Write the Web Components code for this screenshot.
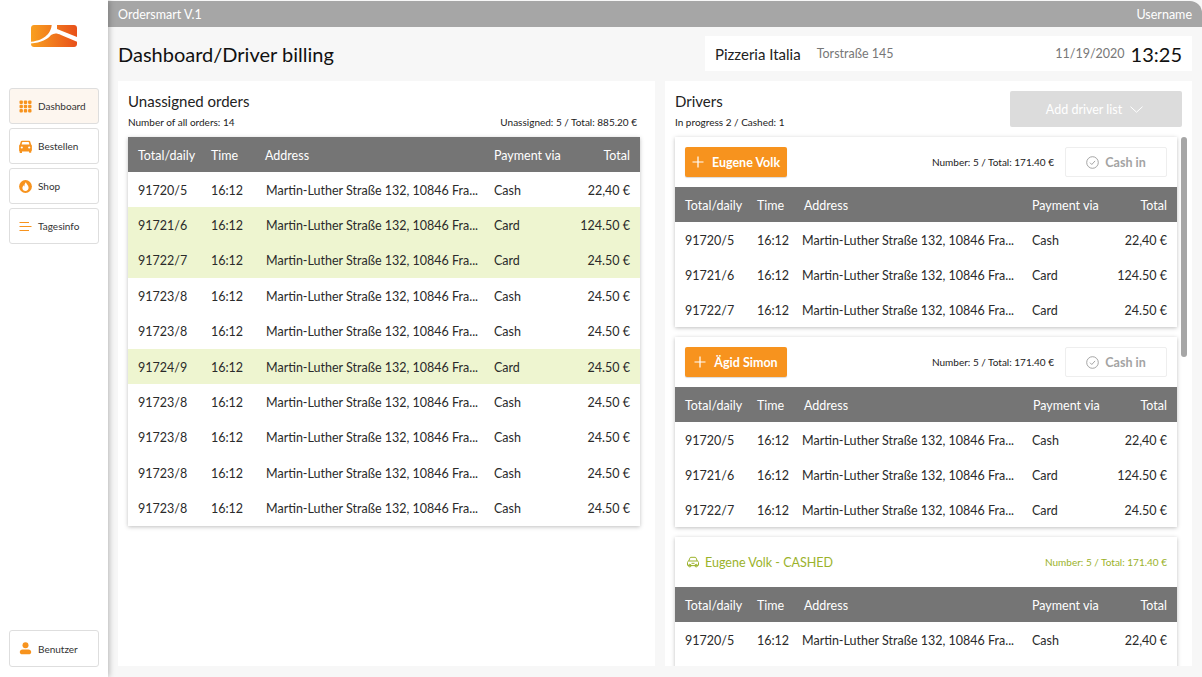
<!DOCTYPE html>
<html lang="en">
<head>
<meta charset="utf-8">
<title>Ordersmart</title>
<style>
  html, body { margin: 0; height: 100%; overflow: hidden; }
  body { font-family: Lato, "Open Sans", sans-serif; color: #222; background: #f7f7f7; }
</style>
</head>
<body>
<app-shell></app-shell>

<script>
const ICONS = {
  grid: `<svg width="13" height="13" viewBox="0 0 13 13" fill="#f7931e"><rect x="0.5" y="0.5" width="3.4" height="3.4" rx="1"/><rect x="4.8" y="0.5" width="3.4" height="3.4" rx="1"/><rect x="9.1" y="0.5" width="3.4" height="3.4" rx="1"/><rect x="0.5" y="4.8" width="3.4" height="3.4" rx="1"/><rect x="4.8" y="4.8" width="3.4" height="3.4" rx="1"/><rect x="9.1" y="4.8" width="3.4" height="3.4" rx="1"/><rect x="0.5" y="9.1" width="3.4" height="3.4" rx="1"/><rect x="4.8" y="9.1" width="3.4" height="3.4" rx="1"/><rect x="9.1" y="9.1" width="3.4" height="3.4" rx="1"/></svg>`,
  car: `<svg width="13" height="13" viewBox="0 0 13 13"><path fill="#f7931e" d="M3 .8h7c.6 0 1 .3 1.200.8l.9 3c.5.3.8.8.8 1.400v4.300c0 .4-.2.700-.6.700v1.200c0 .3-.2.500-.5.500h-1.300c-.3 0-.5-.2-.5-.5V11.500H3v1.200c0 .3-.2.500-.5.500H1.200c-.3 0-.5-.2-.5-.5v-1.200c-.4 0-.6-.3-.6-.7V6c0-.6.300-1.100.8-1.400l.9-3C2 1.100 2.400.8 3 .8z"/><path fill="#fff" d="M3.300 2h6.400l.7 2.500H2.600z"/><circle cx="2.800" cy="7.500" r="1.100" fill="#fff"/><circle cx="10.200" cy="7.500" r="1.100" fill="#fff"/></svg>`,
  shop: `<svg width="13" height="13" viewBox="0 0 13 13"><circle cx="6.500" cy="6.500" r="6.400" fill="#f7931e"/><path fill="#fff" d="M6.900 2.200c.4 1.600 2.700 2.900 2.700 5.600 0 1.900-1.400 3.200-3.100 3.200s-3.100-1.300-3.100-3c0-1.300.7-2.200 1.300-2.800.1.700.4 1.100.8 1.300-.2-1.600.2-3.200 1.400-4.300z"/></svg>`,
  lines: `<svg width="13" height="13" viewBox="0 0 13 13" stroke="#f7931e" stroke-width="1.100" fill="none"><path d="M.5 2.500h9.500M.5 6.500h12M.5 10.500h9.500"/></svg>`,
  user: `<svg width="13" height="13" viewBox="0 0 13 13" fill="#f7931e"><circle cx="6.500" cy="3.300" r="3"/><path d="M3.500 7.500h6c1.500 0 2.700 1 2.700 2.400 0 1.400-1 2.300-2.700 2.300h-6C1.800 12.200.8 11.300.8 9.900c0-1.400 1.200-2.400 2.700-2.400z"/></svg>`,
  plus: `<svg width="12" height="12" viewBox="0 0 12 12" stroke="#fff" stroke-width="1.200" fill="none"><path d="M6 .5v11M.5 6h11"/></svg>`,
  check: `<svg width="13" height="13" viewBox="0 0 13 13" stroke="#9a9a9a" stroke-width=".9" fill="none"><circle cx="6.500" cy="6.500" r="5.800"/><path d="M4 6.700l1.800 1.800 3.300-3.600"/></svg>`,
  chevron: `<svg width="13" height="7" viewBox="0 0 13 7" stroke="#fff" stroke-width="1" fill="none"><path d="M.5.700l6 5.500 6-5.500"/></svg>`,
  greenCar: `<svg width="14" height="12" viewBox="0 0 14 12" stroke="#9bb22a" stroke-width="1" fill="none"><path d="M2.800 5l1-2.800c.2-.6.600-.9 1.200-.9h4c.6 0 1 .3 1.200.9l1 2.800"/><path d="M1.500 9V6.500C1.500 5.600 2.100 5 3 5h8c.9 0 1.500.6 1.500 1.500V9c0 .4-.2.600-.6.600H2.100c-.4 0-.6-.2-.6-.6z"/><circle cx="3.800" cy="9.600" r="1.300"/><circle cx="10.200" cy="9.600" r="1.300"/><path d="M5.500 7.300h3"/></svg>`
};

const ADDRESS = 'Martin-Luther Straße 132, 10846 Fra...';

class NavButton extends HTMLElement {
  connectedCallback() {
    if (this.shadowRoot) return;
    const shadow = this.attachShadow({ mode: 'open' });
    const active = this.hasAttribute('active');
    shadow.innerHTML = `
      <style>
        :host { display: flex; align-items: center; box-sizing: border-box; width: 90px; height: 36px; padding-left: 9px; gap: 6px; flex: none;
          border: 1px solid #dedede; border-radius: 3px; background: ${active ? '#fdf6ef' : '#fff'}; font-size: 10px; color: #333; }
        .icon { display: flex; }
      </style>
      <span class="icon">${ICONS[this.getAttribute('icon')]}</span><slot></slot>`;
  }
}

class SideBar extends HTMLElement {
  connectedCallback() {
    if (this.shadowRoot) return;
    const shadow = this.attachShadow({ mode: 'open' });
    shadow.innerHTML = `
      <style>
        :host { display: flex; flex-direction: column; box-sizing: border-box; flex: none; width: 108px; height: 677px; padding: 25px 0 10px 9px;
          background: #fff; box-shadow: 1px 0 6px rgba(0,0,0,.28); position: relative; z-index: 2; }
        .logo { display: block; margin: 0 0 41px 22px; }
        nav { display: flex; flex-direction: column; gap: 4px; flex: 1; }
        .user { height: 37px; }
      </style>
      <svg class="logo" width="46" height="22" viewBox="0 0 46 22">
        <defs>
          <linearGradient id="lg" x1="0" x2="1" y1="0" y2="0"><stop offset="0" stop-color="#f9a020"/><stop offset="1" stop-color="#e8501a"/></linearGradient>
          <clipPath id="lc"><path d="M3 0h40c1.700 0 3 1.300 3 3v16c0 1.700-1.300 3-3 3H3c-1.700 0-3-1.300-3-3V3C0 1.300 1.300 0 3 0z"/></clipPath>
        </defs>
        <g clip-path="url(#lc)">
          <rect width="46" height="22" fill="url(#lg)"/>
          <path fill="#fff" d="M20.700 0C20 7 15 15 0 16.800V18.400C10 18 17 14 20 10 23 8 26 8 30 10L46 16.700V12L26 4V0Z"/>
        </g>
      </svg>
      <nav>
        <nav-button icon="grid" active>Dashboard</nav-button>
        <nav-button icon="car">Bestellen</nav-button>
        <nav-button icon="shop">Shop</nav-button>
        <nav-button icon="lines">Tagesinfo</nav-button>
      </nav>
      <nav-button class="user" icon="user">Benutzer</nav-button>`;
  }
}

class TopBar extends HTMLElement {
  connectedCallback() {
    if (this.shadowRoot) return;
    const shadow = this.attachShadow({ mode: 'open' });
    shadow.innerHTML = `
      <style>
        :host { display: flex; justify-content: space-between; align-items: center; box-sizing: border-box; height: 26px; margin-top: 1px; padding: 0 10px;
          background: #a6a6a6; color: #fff; font-size: 12.500px; border-top-right-radius: 12px; }
      </style>
      <span>Ordersmart V.1</span><span>Username</span>`;
  }
}

class StoreInfo extends HTMLElement {
  connectedCallback() {
    if (this.shadowRoot) return;
    const shadow = this.attachShadow({ mode: 'open' });
    shadow.innerHTML = `
      <style>
        :host { display: flex; align-items: center; box-sizing: border-box; width: 487px; height: 35px; padding: 0 10px; background: #fff; }
        .name { font-size: 15px; color: #222; }
        .street { font-size: 12.500px; color: #777; margin-left: 16px; }
        .date { font-size: 12.500px; color: #777; margin-left: auto; }
        .time { font-size: 20px; color: #111; margin-left: 6px; }
      </style>
      <span class="name">Pizzeria Italia</span><span class="street">Torstraße 145</span>
      <span class="date">11/19/2020</span><span class="time">13:25</span>`;
  }
}

class OrderTable extends HTMLElement {
  connectedCallback() {
    if (this.shadowRoot) return;
    const shadow = this.attachShadow({ mode: 'open' });
    const cols = this.getAttribute('cols');
    const rows = JSON.parse(this.getAttribute('rows'));
    const payHead = this.getAttribute('pay-head') || '0';
    const addrHead = this.getAttribute('addr-head') || '0';
    const addrRow = this.getAttribute('addr-row') || '0';
    const row = r => `
      <div class="row${r[3] ? ' hi' : ''}"><span>${r[0]}</span><span>16:12</span><span class="addr">${ADDRESS}</span><span>${r[1]}</span><span class="num">${r[2]}</span></div>`;
    shadow.innerHTML = `
      <style>
        :host { display: block; font-size: 12.500px; color: #2a2a2a; background: #fff; }
        .row { display: grid; grid-template-columns: ${cols}; align-items: center; height: var(--row-height, 35.400px); padding: var(--row-pad, 1px) 10px 0; box-sizing: border-box; white-space: nowrap; }
        .head { background: #757575; color: #fff; height: 35px; padding-top: 1.400px; }
        .head .adr { margin-left: ${addrHead}px; }
        .head .pay { margin-left: ${payHead}px; }
        .hi { background: #eef5d0; }
        .num { text-align: right; }
        .addr { margin-left: ${addrRow}px; }
      </style>
      <div class="row head"><span>Total/daily</span><span>Time</span><span class="adr">Address</span><span class="pay">Payment via</span><span class="num">Total</span></div>
      ${rows.map(row).join('')}`;
  }
}

class DriverCard extends HTMLElement {
  connectedCallback() {
    if (this.shadowRoot) return;
    const shadow = this.attachShadow({ mode: 'open' });
    const name = this.getAttribute('name');
    const cashed = this.hasAttribute('cashed');
    const top = cashed
      ? `<div class="top cashed"><span class="who">${ICONS.greenCar}<span>${name} - CASHED</span></span><span class="sum">Number: 5 / Total: 171.40 €</span></div>`
      : `<div class="top"><span class="driver">${ICONS.plus}<span>${name}</span></span><span class="sum">Number: 5 / Total: 171.40 €</span><span class="cash">${ICONS.check}<span>Cash in</span></span></div>`;
    shadow.innerHTML = `
      <style>
        :host { display: block; flex: none; background: #fff; box-shadow: 0 1px 4px rgba(0,0,0,.25); --row-height: 35px; --row-pad: 1.400px; }
        :host([cashed]) { min-height: 150px; }
        .top { display: flex; align-items: center; box-sizing: border-box; height: 50px; padding: 0 10px; }
        .driver { display: flex; align-items: center; gap: 8px; box-sizing: border-box; width: 102px; height: 30px; justify-content: center; border-radius: 2px;
          background: #f7931e; color: #fff; font-size: 12.500px; font-weight: 700; box-shadow: 0 1px 1px rgba(0,0,0,.15); }
        .sum { font-size: 10px; color: #222; margin-left: auto; }
        .cash { display: flex; align-items: center; justify-content: center; gap: 6px; box-sizing: border-box; width: 102px; height: 30px; margin-left: 11px;
          border: 1px solid #eee; border-radius: 2px; color: #a3a3a3; font-size: 12.500px; font-weight: 700; }
        .who { display: flex; align-items: center; gap: 5px; color: #9bb22a; font-size: 12.500px; margin-left: 1px; }
        .cashed .sum { color: #9bb22a; }
      </style>
      ${top}
      <order-table cols="72px 46px 229px 72px 1fr" addr-head="1" addr-row="-1" pay-head="${this.getAttribute('pay-head') || 0}" rows='${this.getAttribute('rows')}'></order-table>`;
  }
}

class OrdersPanel extends HTMLElement {
  connectedCallback() {
    if (this.shadowRoot) return;
    const shadow = this.attachShadow({ mode: 'open' });
    const rows = [
      ['91720/5', 'Cash', '22,40 €'], ['91721/6', 'Card', '124.50 €', 1], ['91722/7', 'Card', '24.50 €', 1],
      ['91723/8', 'Cash', '24.50 €'], ['91723/8', 'Cash', '24.50 €'], ['91724/9', 'Card', '24.50 €', 1],
      ['91723/8', 'Cash', '24.50 €'], ['91723/8', 'Cash', '24.50 €'], ['91723/8', 'Cash', '24.50 €'], ['91723/8', 'Cash', '24.50 €']
    ];
    shadow.innerHTML = `
      <style>
        :host { display: block; box-sizing: border-box; width: 537px; background: #fff; padding: 11px 15px 0 10px; }
        h2 { margin: 0; font-size: 15px; font-weight: 400; line-height: 18px; color: #222; }
        .meta { display: flex; justify-content: space-between; font-size: 10px; line-height: 13px; margin: 6px 3px 8px 0; color: #222; }
        order-table { box-shadow: 0 1px 4px rgba(0,0,0,.25); }
      </style>
      <h2>Unassigned orders</h2>
      <div class="meta"><span>Number of all orders: 14</span><span>Unassigned: 5 / Total: 885.20 €</span></div>
      <order-table cols="73px 54px 229px 72px 1fr" addr-row="1" rows='${JSON.stringify(rows)}'></order-table>`;
  }
}

class DriversPanel extends HTMLElement {
  connectedCallback() {
    if (this.shadowRoot) return;
    const shadow = this.attachShadow({ mode: 'open' });
    const three = JSON.stringify([['91720/5', 'Cash', '22,40 €'], ['91721/6', 'Card', '124.50 €'], ['91722/7', 'Card', '24.50 €']]);
    const one = JSON.stringify([['91720/5', 'Cash', '22,40 €']]);
    shadow.innerHTML = `
      <style>
        :host { display: flex; flex-direction: column; box-sizing: border-box; width: 527px; background: #fff; padding: 11px 5px 0 10px; position: relative; overflow: hidden; }
        .head { display: flex; justify-content: space-between; padding-right: 5px; height: 45px; flex: none; }
        h2 { margin: 0; font-size: 15px; font-weight: 400; line-height: 18px; color: #222; }
        .meta { font-size: 10px; line-height: 13px; margin-top: 6px; color: #222; }
        .add { display: flex; align-items: center; justify-content: center; gap: 8px; box-sizing: border-box; width: 172px; height: 36px; margin: -1px 0 0; padding-right: 3px; background: #dcdcdc;
          border-radius: 2px; color: #fff; font-size: 12.500px; }
        .list { display: flex; flex-direction: column; gap: 10px; width: 502px; }
        .thumb { position: absolute; top: 56px; right: 5px; width: 6px; height: 220px; background: #a6a6a6; border-radius: 3px; }
      </style>
      <div class="head">
        <div><h2>Drivers</h2><div class="meta">In progress 2 / Cashed: 1</div></div>
        <div class="add"><span>Add driver list</span>${ICONS.chevron}</div>
      </div>
      <div class="list">
        <driver-card name="Eugene Volk" rows='${three}'></driver-card>
        <driver-card name="Ägid Simon" pay-head="1" rows='${three}'></driver-card>
        <driver-card name="Eugene Volk" cashed rows='${one}'></driver-card>
      </div>
      <div class="thumb"></div>`;
  }
}

class AppShell extends HTMLElement {
  connectedCallback() {
    if (this.shadowRoot) return;
    const shadow = this.attachShadow({ mode: 'open' });
    shadow.innerHTML = `
      <style>
        :host { display: flex; height: 677px; width: 1202px; overflow: hidden; background: #f7f7f7; }
        main { flex: 1; display: flex; flex-direction: column; min-width: 0; }
        .title { display: flex; justify-content: space-between; align-items: center; height: 35px; margin: 9px 10px 10px; }
        h1 { margin: 0; font-size: 20px; font-weight: 400; color: #111; }
        .panels { display: flex; gap: 10px; height: 585px; margin: 0 10px; }
      </style>
      <side-bar></side-bar>
      <main>
        <top-bar></top-bar>
        <div class="title"><h1>Dashboard/Driver billing</h1><store-info></store-info></div>
        <div class="panels"><orders-panel></orders-panel><drivers-panel></drivers-panel></div>
      </main>`;
  }
}

customElements.define('nav-button', NavButton);
customElements.define('side-bar', SideBar);
customElements.define('top-bar', TopBar);
customElements.define('store-info', StoreInfo);
customElements.define('order-table', OrderTable);
customElements.define('driver-card', DriverCard);
customElements.define('orders-panel', OrdersPanel);
customElements.define('drivers-panel', DriversPanel);
customElements.define('app-shell', AppShell);
</script>
</body>
</html>
